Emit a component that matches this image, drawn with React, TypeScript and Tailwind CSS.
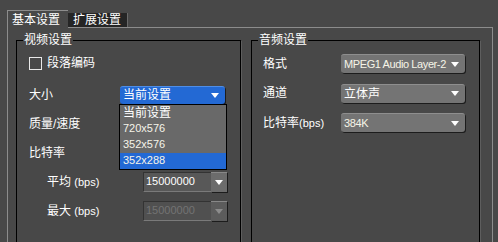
import React from 'react';

// Video export settings panel - dark theme, "基本设置" tab open

function Caret({ dim = false }: { dim?: boolean }) {
  return (
    <svg width="8" height="5" viewBox="0 0 8 5" className="shrink-0">
      <path d="M0 0h8L4 5z" fill={dim ? '#8c8c8c' : '#ffffff'} />
    </svg>
  );
}

function GraySelect({ value, latin = true }: { value: string; latin?: boolean }) {
  return (
    <div className="flex h-[19px] w-[124px] items-center justify-between rounded-[3px] border-t border-[#8e8e8e] bg-[#747474] pl-[3px] pr-[6px] shadow-[1px_1px_0_#1c1c1c]">
      <span
        className={`whitespace-nowrap leading-none ${
          latin ? 'text-[11px] tracking-[-0.4px] text-[#f6f4e8]' : 'text-[12px] text-white'
        }`}
      >
        {value}
      </span>
      <Caret />
    </div>
  );
}

function NumberBox({ value, disabled = false }: { value: string; disabled?: boolean }) {
  return (
    <div className="flex h-[20px]">
      <div
        className={`flex w-[68px] items-center border-t border-l border-b border-t-[#333] border-l-[#333] border-b-[#7a7a7a] pl-[2px] text-[11px] leading-none ${
          disabled ? 'bg-[#505050] text-[#737373]' : 'bg-[#585858] text-white'
        }`}
      >
        {value}
      </div>
      <div
        className={`flex w-[16px] items-center justify-center border-t border-[#888] shadow-[1px_1px_0_#1c1c1c] ${
          disabled ? 'bg-[#5c5c5c]' : 'bg-[#6c6c6c]'
        }`}
      >
        <Caret dim={disabled} />
      </div>
    </div>
  );
}

const sizeOptions = ['当前设置', '720x576', '352x576', '352x288'];

export default function App() {
  return (
    <div className="flex h-[242px] w-[498px] flex-col overflow-hidden bg-[#484848] pl-[7px] pr-[5px] pt-[10px] font-['Liberation_Sans','Noto_Sans_CJK_SC',sans-serif] text-[12px] text-white">
      {/* Tabs */}
      <div className="flex h-[17px] items-end">
        <div className="relative z-10 -mb-px flex h-[18px] w-[61px] items-center border-l border-t border-[#8c8c8c] bg-[#484848] pl-[4px] leading-none">
          基本设置
        </div>
        <div className="flex h-[14px] w-[60px] items-center border-r border-[#6a6a6a] bg-[#252525] pl-[5px] leading-none">
          扩展设置
        </div>
      </div>

      {/* Panel */}
      <div className="flex flex-1 gap-[10px] border-l border-r border-t border-[#8c8c8c] pl-[8px] pr-[12px] pt-[12px]">
        {/* Video group */}
        <div className="relative h-[220px] w-[225px] border border-black shadow-[1px_1px_0_#5e5e5e]">
          <span className="absolute left-[6px] top-[-9px] bg-[#484848] px-[1px] leading-[16px]">视频设置</span>

          <div className="mt-[14px] flex h-[16px] items-center gap-[5px] pl-[12px]">
            <div className="h-[13px] w-[13px] border border-[#e8e8e8]" />
            <span className="leading-none">段落编码</span>
          </div>

          <div className="mt-[9px] flex h-[29px] items-center pl-[12px]">
            <span className="w-[91px] leading-none">大小</span>
            <div className="relative">
              <div className="flex h-[18px] w-[105px] items-center justify-between rounded-[3px] border-t border-[#4f8ee6] bg-[#2369d4] pl-[3px] pr-[6px] shadow-[1px_1px_0_#1c1c1c]">
                <span className="leading-none">当前设置</span>
                <Caret />
              </div>
              <div className="absolute left-[-1px] top-full z-20 w-[108px] border border-black bg-[#696969]">
                {sizeOptions.map((opt, i) => (
                  <div
                    key={opt}
                    className={`flex h-[16px] items-center pl-[3px] leading-none ${
                      i === 0 ? 'text-[12px] text-white' : 'text-[11px] text-[#f6f4ea]'
                    } ${i === 3 ? 'bg-[#2369d4]' : ''}`}
                  >
                    {opt}
                  </div>
                ))}
              </div>
            </div>
          </div>

          <div className="flex h-[29px] items-center pl-[12px]">
            <span className="leading-none">质量/速度</span>
          </div>

          <div className="flex h-[29px] items-center pl-[12px]">
            <span className="leading-none">比特率</span>
          </div>

          <div className="flex h-[29px] items-center pl-[30px]">
            <span className="w-[96px] leading-none">
              平均 <span className="text-[11px]">(bps)</span>
            </span>
            <NumberBox value="15000000" />
          </div>

          <div className="flex h-[29px] items-center pl-[30px]">
            <span className="w-[96px] leading-none">
              最大 <span className="text-[11px]">(bps)</span>
            </span>
            <NumberBox value="15000000" disabled />
          </div>
        </div>

        {/* Audio group */}
        <div className="relative h-[220px] w-[229px] border border-black shadow-[1px_1px_0_#5e5e5e]">
          <span className="absolute left-[6px] top-[-9px] bg-[#484848] px-[1px] leading-[16px]">音频设置</span>

          <div className="mt-[8px] flex h-[29px] items-center pl-[11px]">
            <span className="w-[78px] leading-none">格式</span>
            <GraySelect value="MPEG1 Audio Layer-2" />
          </div>
          <div className="flex h-[30px] items-center pl-[11px]">
            <span className="w-[78px] leading-none">通道</span>
            <GraySelect value="立体声" latin={false} />
          </div>
          <div className="flex h-[29px] items-center pl-[11px]">
            <span className="w-[78px] leading-none">
              比特率<span className="text-[11px]">(bps)</span>
            </span>
            <GraySelect value="384K" />
          </div>
        </div>
      </div>
    </div>
  );
}
